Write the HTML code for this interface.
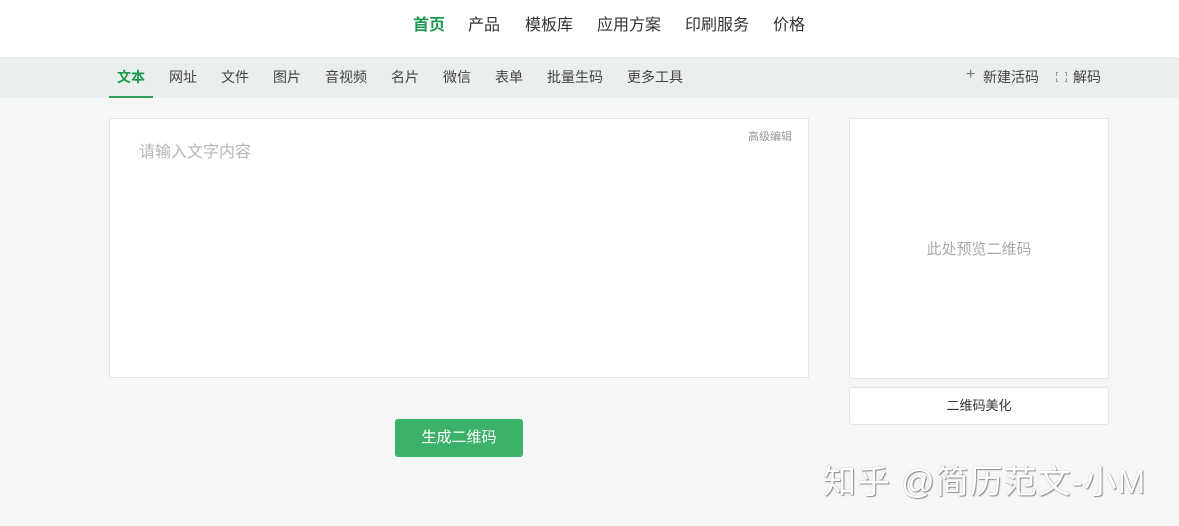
<!DOCTYPE html>
<html><head><meta charset="utf-8"><style>
*{margin:0;padding:0;box-sizing:border-box}
body{width:1179px;height:526px;background:#f5f7f6;font-family:"Liberation Sans","Noto Sans CJK SC",sans-serif;position:relative;overflow:hidden;color:#333}
.top{position:absolute;left:0;top:0;width:1179px;height:57px;background:#fff}
.top span{position:absolute;top:15px;font-size:16px;color:#333;line-height:22px}
.sub{position:absolute;left:0;top:57px;width:1179px;height:41px;background:#ebefec}
.sub span{position:absolute;top:10px;font-size:14px;color:#444;line-height:20px}
.ul{position:absolute;left:109px;top:96px;width:44px;height:2px;background:#2ea05f}
.box{position:absolute;background:#fff;border:1px solid #e3e6e4}
.abs{position:absolute}
</style></head><body>
<div class="top">
<span style="left:413px;color:#1c9a4f;font-weight:bold">首页</span>
<span style="left:468px">产品</span>
<span style="left:525px">模板库</span>
<span style="left:597px">应用方案</span>
<span style="left:685px">印刷服务</span>
<span style="left:773px">价格</span>
</div>
<div class="sub">
<span style="left:117px;color:#1c9a4f;font-weight:bold">文本</span>
<span style="left:169px">网址</span>
<span style="left:221px">文件</span>
<span style="left:273px">图片</span>
<span style="left:325px">音视频</span>
<span style="left:391px">名片</span>
<span style="left:443px">微信</span>
<span style="left:495px">表单</span>
<span style="left:547px">批量生码</span>
<span style="left:627px">更多工具</span>
<span style="left:966px;color:#777;font-size:16px;top:8px">+</span>
<span style="left:983px">新建活码</span>
<span style="left:1056px;top:15px;width:11px;height:10px;border:1px solid #999;border-left-width:1px;"></span>
<span style="left:1058px;top:13px;width:7px;height:14px;background:#ebefec"></span>
<span style="left:1054px;top:19px;width:15px;height:2px;background:#ebefec"></span>
<span style="left:1073px">解码</span>
</div>
<div class="ul"></div>
<div class="box" style="left:109px;top:118px;width:700px;height:260px">
<div class="abs" style="left:29px;top:19px;font-size:16px;color:#b5b5b5">请输入文字内容</div>
<div class="abs" style="left:638px;top:9px;font-size:11px;color:#999">高级编辑</div>
</div>
<div class="box" style="left:849px;top:118px;width:260px;height:261px">
<div class="abs" style="left:0;width:258px;top:119px;text-align:center;font-size:15px;color:#aaa">此处预览二维码</div>
</div>
<div class="box" style="left:849px;top:387px;width:260px;height:38px;border-radius:3px;text-align:center;line-height:36px;font-size:13px;color:#333">二维码美化</div>
<div class="abs" style="left:395px;top:419px;width:128px;height:38px;background:#3cb16a;border-radius:3px;color:#fff;font-size:15px;text-align:center;line-height:38px">生成二维码</div>
<div class="abs" style="left:823px;top:455px;font-size:33px;letter-spacing:1px;color:#fff;text-shadow:1px 1px 1px #888,0 0 1px #999;white-space:nowrap">知乎 @简历范文-小M</div>
</body></html>
